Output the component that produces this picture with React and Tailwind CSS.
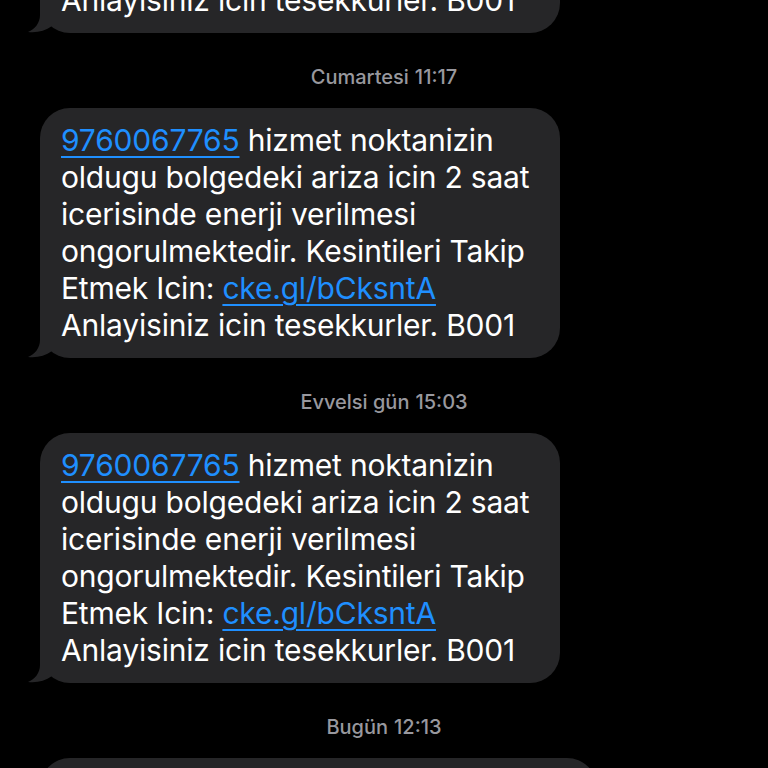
const LINK = "text-[#1f8fff] underline decoration-[2px] underline-offset-[5px]";

const lines = [
  <><span className={LINK}>9760067765</span> hizmet noktanizin</>,
  <>oldugu bolgedeki ariza icin 2 saat</>,
  <>icerisinde enerji verilmesi</>,
  <>ongorulmektedir. Kesintileri Takip</>,
  <>Etmek Icin: <span className={LINK}>cke.gl/bCksntA</span></>,
  <>Anlayisiniz icin tesekkurler. B001</>,
];

function Tail() {
  return (
    <svg
      className="absolute -left-[12px] bottom-0"
      width="34"
      height="32"
      viewBox="0 0 34 32"
    >
      <path d="M12 0 L12 14 C12 22 7 28 0 31 C9 32 17 30 24 25 L34 25 L34 0 Z" fill="#262628" />
    </svg>
  );
}

function Bubble({ className = "" }) {
  return (
    <div className={`relative ml-[40px] w-[520px] rounded-[30px] bg-[#262628] pl-[21px] pr-[18px] pt-[14px] pb-[14px] ${className}`}>
      <Tail />
      <div className="relative text-[30px] leading-[37px] text-white tracking-[-0.2px]">
        {lines.map((l, i) => (
          <div key={i} className="whitespace-nowrap">{l}</div>
        ))}
      </div>
    </div>
  );
}

function Stamp({ day, time }) {
  return (
    <div className="flex items-center justify-center gap-[6px] pt-[33px] pb-[19px] text-[20px] leading-[23px] text-[#98989e] font-medium">
      <span>{day}</span>
      <span>{time}</span>
    </div>
  );
}

export default function App() {
  return (
    <div
      className="h-[768px] w-[768px] overflow-hidden bg-black"
      style={{ fontFamily: "Inter, 'Noto Sans', sans-serif" }}
    >
      <div className="-mt-[217px]">
        <Bubble />
        <Stamp day="Cumartesi" time="11:17" />
        <Bubble />
        <Stamp day="Evvelsi gün" time="15:03" />
        <Bubble />
        <Stamp day="Bugün" time="12:13" />
        <div className="ml-[40px] h-[60px] w-[557px] rounded-[30px] bg-[#262628]" />
      </div>
    </div>
  );
}
